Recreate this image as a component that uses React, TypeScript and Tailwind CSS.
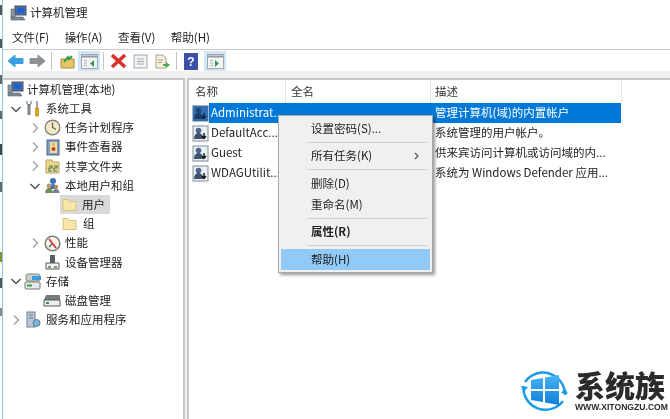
const CJK = "font-['Noto_Sans_CJK_SC','Noto_Sans',sans-serif]"

function Chevron({ open }: { open?: boolean }) {
  return (
    <svg width="10" height="10" viewBox="0 0 10 10" fill="none" stroke={open ? "#555" : "#a6a6a6"} strokeWidth="1.5">
      {open ? <path d="M.5 3l4.500 4.500L9.500 3" /> : <path d="M3 .5L7.500 5 3 9.500" />}
    </svg>
  )
}

function Computer() {
  return (
    <svg width="17" height="17" viewBox="0 0 17 17">
      <rect x="5" y="1" width="11" height="9" fill="#4a6f9c" stroke="#46525f" />
      <rect x="7" y="3" width="7" height="5" fill="#1f5fd0" />
      <path d="M1 4h4v8H1z" fill="#8a97a3" stroke="#56606a" strokeWidth=".6" />
      <path d="M1 12h12l2 3H1z" fill="#7d8a93" stroke="#56606a" strokeWidth=".6" />
    </svg>
  )
}

function Tools() {
  return (
    <svg width="16" height="17" viewBox="0 0 16 17">
      <path d="M4 4.500V15" stroke="#7c8288" strokeWidth="3" />
      <path d="M2 1v3l2 1 2-1V1" fill="none" stroke="#6a6f74" strokeWidth="1" />
      <path d="M11 1h2v7h-2z" fill="#a0a5a8" />
      <path d="M10.500 8h3v8h-3z" fill="#e2a60f" stroke="#9b6f05" strokeWidth=".5" />
    </svg>
  )
}

function Clock() {
  return (
    <svg width="17" height="17" viewBox="0 0 17 17">
      <circle cx="8.500" cy="8.500" r="7.300" fill="#f1e9c9" stroke="#86837a" strokeWidth="1.400" />
      <path d="M8.500 3.500v5l3.500 2" fill="none" stroke="#6b5c3a" strokeWidth="1.200" />
    </svg>
  )
}

function EventLog() {
  return (
    <svg width="17" height="17" viewBox="0 0 17 17">
      <rect x="3" y="1" width="12" height="15" fill="#7f9fc4" stroke="#4e6480" />
      <rect x="6" y="3" width="7" height="11" fill="#f4d9a0" />
      <circle cx="9.500" cy="10" r="2" fill="#c8412d" />
      <path d="M9.500 4v3" stroke="#c9a227" strokeWidth="1.400" />
    </svg>
  )
}

function SharedFolder() {
  return (
    <svg width="17" height="17" viewBox="0 0 17 17">
      <path d="M2 5V2h6l1 2h6v11H2z" fill="#ecd78f" stroke="#b9a566" />
      <path d="M5 8h3v2H5v3h3M10 8h3v2h-3v3h3" fill="none" stroke="#4a7a52" strokeWidth="1.100" />
    </svg>
  )
}

function Users() {
  return (
    <svg width="17" height="17" viewBox="0 0 17 17">
      <circle cx="9" cy="4" r="3" fill="#3d6fb5" />
      <path d="M5 12c0-3 2-5 4-5s4 2 4 5z" fill="#3d6fb5" />
      <circle cx="5" cy="9" r="2.400" fill="#c29a6a" />
      <path d="M1 16c0-3 2-5 4-5s4 2 4 5z" fill="#6a8f55" />
      <circle cx="12" cy="10" r="2.200" fill="#b58a5c" />
      <path d="M8.500 16c0-2.500 1.500-4 3.500-4s3.500 1.500 3.500 4z" fill="#7a7f88" />
    </svg>
  )
}

function Folder() {
  return (
    <svg width="15" height="14" viewBox="0 0 15 14">
      <path d="M1 12.500V1.500h5l1 2h7v9z" fill="#f8e6a8" stroke="#d8c27e" />
    </svg>
  )
}

function Perf() {
  return (
    <svg width="17" height="17" viewBox="0 0 17 17">
      <circle cx="8.500" cy="8.500" r="7.300" fill="#f5f3ee" stroke="#86827c" strokeWidth="1.600" />
      <path d="M5 4l7 9" stroke="#c9301f" strokeWidth="1.600" />
      <path d="M8 9l-3 3" stroke="#4a5a78" strokeWidth="1.200" />
    </svg>
  )
}

function Device() {
  return (
    <svg width="17" height="17" viewBox="0 0 17 17">
      <rect x="6" y="1" width="5" height="8" fill="#5a5f63" />
      <path d="M2 9h13v6H2z" fill="#f4f4f4" stroke="#54585c" />
      <path d="M4 13h3M10 13h3" stroke="#3c7f3c" strokeWidth="1.400" />
    </svg>
  )
}

function Storage() {
  return (
    <svg width="18" height="17" viewBox="0 0 18 17">
      <rect x="2" y="1" width="14" height="7" rx="2" fill="#c9d2c9" stroke="#7f8a84" />
      <rect x="8" y="3" width="9" height="4" fill="#3d9bdc" />
      <rect x="1" y="9" width="15" height="7" rx="1" fill="#e8ecec" stroke="#6f7a74" />
      <path d="M3 12.500h5" stroke="#3f9a4a" strokeWidth="2" />
    </svg>
  )
}

function Disk() {
  return (
    <svg width="18" height="15" viewBox="0 0 18 15">
      <path d="M3 2h14v5H1z" fill="#77797b" />
      <path d="M1 7h16v6H1z" fill="#efefef" stroke="#55585a" />
      <path d="M3 10h3" stroke="#3d8f45" strokeWidth="2" />
    </svg>
  )
}

function Services() {
  return (
    <svg width="17" height="17" viewBox="0 0 17 17">
      <rect x="2" y="1" width="8" height="15" fill="#b9c8d6" stroke="#72808e" />
      <path d="M4 4h4M4 7h4" stroke="#6a7886" />
      <circle cx="11.500" cy="12" r="3.500" fill="#7fb4d8" stroke="#4e7fa1" />
    </svg>
  )
}

function UserIcon() {
  return (
    <svg width="17" height="17" viewBox="0 0 17 17">
      <rect x="1" y="1" width="15" height="15" fill="#eef1f4" stroke="#7f8d9e" />
      <circle cx="6.500" cy="5.500" r="2.800" fill="#4b648a" />
      <path d="M2 14c0-4 2-6 4.500-6S11 10 11 14z" fill="#3e5273" />
      <path d="M12 8v5M10 11l2 2.500 2-2.500" fill="none" stroke="#111" strokeWidth="1.400" />
    </svg>
  )
}

function AdminIcon() {
  return (
    <svg width="17" height="17" viewBox="0 0 17 17">
      <rect x="1" y="1" width="15" height="15" fill="#2f6fb7" stroke="#4b6f92" />
      <circle cx="6.500" cy="5.500" r="2.800" fill="#23466f" />
      <path d="M2 14c0-4 2-6 4.500-6S11 10 11 14z" fill="#1f3d66" />
      <path d="M12 8v5M10 11l2 2.500 2-2.500" fill="none" stroke="#10243f" strokeWidth="1.400" />
    </svg>
  )
}

function TreeRow({ indent, chevron, icon, label }: { indent: string; chevron?: "open" | "closed"; icon: React.ReactNode; label: string }) {
  return (
    <div className={`flex h-[19.2px] items-center ${indent}`}>
      <span className="flex w-[12px] shrink-0 items-center">{chevron && <Chevron open={chevron === "open"} />}</span>
      <span className="flex w-[20px] shrink-0 items-center justify-center">{icon}</span>
      <span className="ml-[3px] text-[11.5px] leading-none text-[#222]">{label}</span>
    </div>
  )
}

function ToolBtn({ children, active }: { children: React.ReactNode; active?: boolean }) {
  return (
    <span className={`flex h-[20px] w-[22px] items-center justify-center ${active ? "bg-[#cfe6f8]" : ""}`}>{children}</span>
  )
}

function Sep({ className }: { className: string }) {
  return <span className={`h-[18px] w-px bg-[#c4c4c4] ${className}`} />
}

function PaneIcon({ arrow }: { arrow: string }) {
  return (
    <svg width="17" height="15" viewBox="0 0 17 15">
      <rect x=".5" y=".5" width="16" height="14" fill="#f4f4f4" stroke="#a3a8ad" />
      <path d="M1 2.500h15" stroke="#8e9aa6" strokeWidth="2" />
      <path d="M3 6.500h3M3 9h3M3 11.500h3" stroke="#a8b0b8" />
      <path d={arrow} fill="#2f9a5a" />
    </svg>
  )
}

const users = [
  { name: "Administrat...", icon: <AdminIcon />, desc: "管理计算机(域)的内置帐户", selected: true },
  { name: "DefaultAcc...", icon: <UserIcon />, desc: "系统管理的用户帐户。" },
  { name: "Guest", icon: <UserIcon />, desc: "供来宾访问计算机或访问域的内..." },
  { name: "WDAGUtilit...", icon: <UserIcon />, desc: "系统为 Windows Defender 应用..." },
]

// cut-off bits of the page behind the window, along the left edge
const edgeMarks = [
  "mt-[5px] h-[10px] bg-[#555]",
  "mt-[24px] h-[9px] bg-[#555]",
  "mt-[27px] h-[9px] bg-[#666]",
  "mt-[27px] h-[8px] bg-[#666]",
  "mt-[25px] h-[11px] bg-[#444]",
  "mt-[27px] h-[10px] bg-[#666]",
  "mt-[60px] h-[10px] bg-[#8a8a3a]",
  "mt-[16px] h-[10px] bg-[#555]",
  "mt-[20px] h-[8px] bg-[#888]",
]

function MenuItem({ label, bold, arrow, hot }: { label: string; bold?: boolean; arrow?: boolean; hot?: boolean }) {
  return (
    <div className={`flex h-[21px] items-center justify-between pl-[30px] pr-[9px] text-[11.5px] leading-none text-[#222] ${bold ? "font-bold" : ""} ${hot ? "bg-[#91c9f7]" : ""}`}>
      <span>{label}</span>
      {arrow && (
        <svg width="8" height="10" viewBox="0 0 8 10" fill="none" stroke="#555" strokeWidth="1.200">
          <path d="M2 2L5 5 2 8" />
        </svg>
      )}
    </div>
  )
}

function MenuSep() {
  return (
    <div className="flex h-[6.5px] items-center pl-[26px] pr-[3px]">
      <div className="h-px w-full bg-[#d2d2d2]" />
    </div>
  )
}

export default function App() {
  return (
    <div className={`relative h-[419px] w-[670px] overflow-hidden bg-white ${CJK} blur-[0.5px]`}>
      <div className="flex h-full">
        <div className="flex w-[2px] shrink-0 flex-col">
          {edgeMarks.map((m) => (
            <span key={m} className={m} />
          ))}
        </div>
        <div className="flex min-w-0 flex-1 flex-col border-l border-[#8fc7e8]">
          {/* title */}
          <div className="flex h-[26px] items-center gap-[3px] pl-[7px]">
            <Computer />
            <span className="text-[11.5px] text-[#222]">计算机管理</span>
          </div>
          {/* menu */}
          <div className="flex h-[24px] items-center gap-[15.5px] border-b border-[#c9c9c9] pl-[9px] text-[11.5px] text-[#222]">
            <span>文件(F)</span>
            <span>操作(A)</span>
            <span>查看(V)</span>
            <span>帮助(H)</span>
          </div>
          {/* toolbar */}
          <div className="flex h-[21px] items-center pl-[1px] pt-[1px]">
            <ToolBtn>
              <svg width="17" height="14" viewBox="0 0 17 14"><path d="M1 7l7-6v3.500h8v5H8V13z" fill="#3b9fe6" stroke="#3b9fe6" strokeLinejoin="round" /></svg>
            </ToolBtn>
            <ToolBtn>
              <svg width="17" height="14" viewBox="0 0 17 14"><path d="M16 7L9 1v3.500H1v5h8V13z" fill="#8d9094" stroke="#8d9094" strokeLinejoin="round" /></svg>
            </ToolBtn>
            <Sep className="ml-[3px] mr-[4px]" />
            <ToolBtn>
              <svg width="15" height="15" viewBox="0 0 15 15"><path d="M1 14V5h13v9z" fill="#e6c565" stroke="#a88a35" /><path d="M4 8l4-5 1 2 3-3" fill="none" stroke="#2f9a4a" strokeWidth="2" /></svg>
            </ToolBtn>
            <ToolBtn active><PaneIcon arrow="M13 6v7L9 9.500z" /></ToolBtn>
            <Sep className="mx-[3px]" />
            <ToolBtn>
              <svg width="17" height="16" viewBox="0 0 17 16"><path d="M2 2l13 12M15 2L2 14" stroke="#d8332b" strokeWidth="3.600" /></svg>
            </ToolBtn>
            <ToolBtn>
              <svg width="15" height="15" viewBox="0 0 15 15"><rect x="1" y="1" width="13" height="13" fill="#f1f4f6" stroke="#a1a8ad" /><path d="M4 5h7M4 7.500h7M4 10h7" stroke="#a0a8b0" /></svg>
            </ToolBtn>
            <ToolBtn>
              <svg width="16" height="15" viewBox="0 0 16 15"><path d="M2 1h7l3 3v10H2z" fill="#f5f1dc" stroke="#a5a08a" /><path d="M4 6h5M4 8.500h4" stroke="#a5a08a" /><path d="M9 10h3V8l4 3-4 3v-2H9z" fill="#4da54f" /></svg>
            </ToolBtn>
            <Sep className="mx-[3px]" />
            <ToolBtn>
              <svg width="14" height="17" viewBox="0 0 14 17"><rect width="14" height="17" fill="#3a4fa8" /><text x="7" y="13" textAnchor="middle" fontSize="12" fontWeight="700" fill="#fff" fontFamily="Liberation Sans">?</text></svg>
            </ToolBtn>
            <span className="ml-[2px] flex"><ToolBtn active><PaneIcon arrow="M8 6v7l4-3.500z" /></ToolBtn></span>
          </div>
          {/* panes */}
          <div className="flex min-h-0 flex-1 bg-[#f0f0f0] pt-[7px]">
            <div className="w-[182px] shrink-0 border-r-2 border-t-2 border-[#c8c8c8] bg-white">
              <div className="flex h-[19.2px] items-center pl-[2px]">
                <span className="flex w-[20px] shrink-0 items-center justify-center"><Computer /></span>
                <span className="ml-[2px] text-[11.5px] leading-none text-[#222]">计算机管理(本地)</span>
              </div>
              <TreeRow indent="pl-[8px]" chevron="open" icon={<Tools />} label="系统工具" />
              <TreeRow indent="pl-[27px]" chevron="closed" icon={<Clock />} label="任务计划程序" />
              <TreeRow indent="pl-[27px]" chevron="closed" icon={<EventLog />} label="事件查看器" />
              <TreeRow indent="pl-[27px]" chevron="closed" icon={<SharedFolder />} label="共享文件夹" />
              <TreeRow indent="pl-[27px]" chevron="open" icon={<Users />} label="本地用户和组" />
              <div className="flex h-[19.2px] items-center pl-[57px]">
                <span className="flex h-[19px] items-center gap-[5px] bg-[#d9d9d9] pl-[2px] pr-[5px] text-[11.5px] leading-none text-[#222]"><Folder />用户</span>
              </div>
              <div className="flex h-[19.2px] items-center pl-[59px] text-[11.5px] leading-none text-[#222]">
                <span className="mr-[6px] flex"><Folder /></span>组
              </div>
              <TreeRow indent="pl-[27px]" chevron="closed" icon={<Perf />} label="性能" />
              <TreeRow indent="pl-[27px]" icon={<Device />} label="设备管理器" />
              <TreeRow indent="pl-[8px]" chevron="open" icon={<Storage />} label="存储" />
              <TreeRow indent="pl-[27px]" icon={<Disk />} label="磁盘管理" />
              <TreeRow indent="pl-[8px]" chevron="closed" icon={<Services />} label="服务和应用程序" />
            </div>
            <div className="ml-[2px] min-w-0 flex-1 border-l-2 border-t-2 border-[#c8c8c8] bg-white">
              <div className="flex h-[23px] text-[11.5px] text-[#333]">
                <div className="flex w-[97px] items-center border-r border-[#e3e3e3] pl-[6px]">名称</div>
                <div className="flex w-[145px] items-center border-r border-[#e3e3e3] pl-[5px]">全名</div>
                <div className="flex w-[191px] items-center border-r border-[#e3e3e3] pl-[4px]">描述</div>
              </div>
              {users.map((u) => (
                <div key={u.name} className="flex h-[20px] items-center text-[11.5px] leading-none text-[#222]">
                  <span className="ml-[3px] flex w-[17px] shrink-0">{u.icon}</span>
                  {u.selected ? (
                    <div className="flex h-[20px] w-[412px] items-center bg-[#0078d7] text-white">
                      <span className="w-[226px] pl-[2px]">{u.name}</span>
                      <span>{u.desc}</span>
                    </div>
                  ) : (
                    <div className="flex">
                      <span className="w-[226px] pl-[2px]">{u.name}</span>
                      <span>{u.desc}</span>
                    </div>
                  )}
                </div>
              ))}
            </div>
          </div>
        </div>
      </div>

      {/* context menu */}
      <div className="absolute left-[278px] top-[115px] w-[155px] border border-[#a8a8a8] bg-[#f0f0f0] p-[2px] shadow-[2px_2px_3px_rgba(0,0,0,0.4)]">
        <MenuItem label="设置密码(S)..." />
        <MenuSep />
        <MenuItem label="所有任务(K)" arrow />
        <MenuSep />
        <MenuItem label="删除(D)" />
        <MenuItem label="重命名(M)" />
        <MenuSep />
        <MenuItem label="属性(R)" bold />
        <MenuSep />
        <MenuItem label="帮助(H)" hot />
      </div>

      {/* watermark */}
      <div className="absolute left-[520px] top-[365px] flex items-start gap-[6px] bg-white pl-[1px]">
        <svg width="48" height="50" viewBox="0 0 48 50">
          <defs>
            <linearGradient id="pane" x1="0" y1="0" x2="0" y2="1">
              <stop offset="0" stopColor="#45b4f2" />
              <stop offset="1" stopColor="#0f7fdc" />
            </linearGradient>
          </defs>
          <path d="M4 17A22 22 0 0 1 44 30" fill="none" stroke="#1e9be8" strokeWidth="2.500" />
          <path d="M42 36A22 22 0 0 1 2.500 21" fill="none" stroke="#1e9be8" strokeWidth="2.500" />
          <path d="M0 21l7 1-4 5zM47 29l-7-1 4-5z" fill="#1e9be8" />
          <path d="M10 15l12-2v11H10zM24 12.500l14-2.500v14H24zM10 26h12v11l-12-2zM24 26h14v14l-14-2.500z" fill="url(#pane)" />
        </svg>
        <div className="flex flex-col pt-[1px]">
          <span className="text-[30px] font-black leading-[36px] text-[#2b2b2b]">系统族</span>
          <span className="font-['Liberation_Sans',sans-serif] text-[8.6px] font-bold leading-[10px] text-[#2b2b2b]">WWW.XITONGZU.COM</span>
        </div>
      </div>
    </div>
  )
}
